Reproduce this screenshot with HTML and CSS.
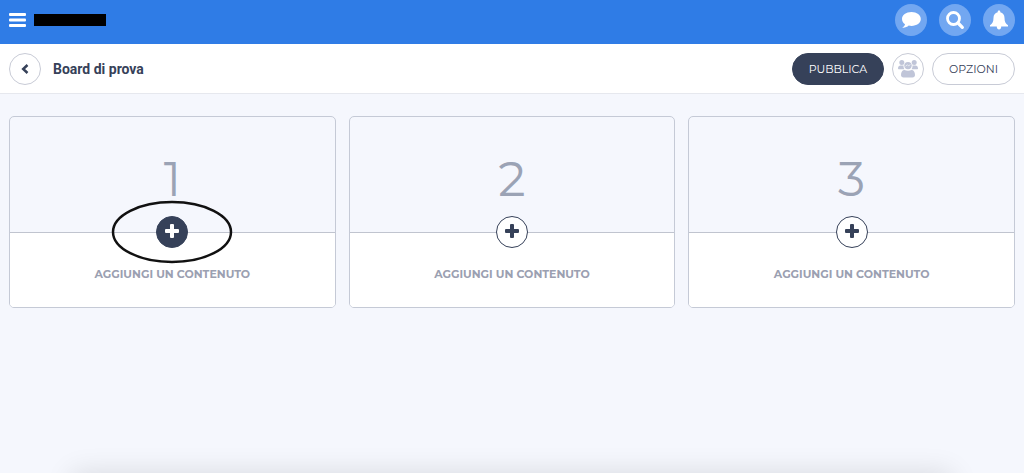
FILE: index.html
```
<!DOCTYPE html>
<html lang="it">
<head>
    <meta charset="UTF-8">
    <meta name="viewport" content="width=device-width, initial-scale=1.0">
    <title>Board di prova</title>
    <link rel="stylesheet" href="styles.css">
</head>
<body>
    <header class="header">
        <button class="menu-btn" aria-label="Menu">
            <svg width="17" height="14" viewBox="0 0 17 14" fill="currentColor">
                <rect width="17" height="3" rx="1"/>
                <rect y="5.5" width="17" height="3" rx="1"/>
                <rect y="11" width="17" height="3" rx="1"/>
            </svg>
        </button>
        <span class="account"></span>
        <nav class="header-actions">
            <button class="header-btn" aria-label="Messaggi">
                <svg width="20" height="18" viewBox="0 0 20 18" fill="currentColor">
                    <path d="M10.5 1C5 1 1 4.1 1 8c0 2.200 1.200 4 3 5.200C3.800 14.600 2.600 15.800 1.200 16.700c2.800.2 5-.6 6.500-2.100.9.200 1.800.3 2.800.3 5.200 0 9.300-3 9.300-6.900S15.700 1 10.500 1z"/>
                </svg>
            </button>
            <button class="header-btn" aria-label="Cerca">
                <svg width="20" height="20" viewBox="0 0 20 20" fill="none" stroke="currentColor">
                    <circle cx="8.500" cy="8.500" r="6" stroke-width="2.800"/>
                    <path d="M13 13l4.300 4.300" stroke-width="3.300" stroke-linecap="round"/>
                </svg>
            </button>
            <button class="header-btn" aria-label="Notifiche">
                <svg width="20" height="20" viewBox="0 0 20 20" fill="currentColor">
                    <path d="M10 .5c.8 0 1.300.5 1.300 1.200v.5c2.600.6 4.200 2.700 4.200 5.500 0 4 1.200 6 3.500 7.500v1.300H1v-1.300c2.300-1.500 3.500-3.500 3.500-7.500 0-2.800 1.600-4.900 4.200-5.500v-.5C8.700 1 9.200.5 10 .5z"/>
                    <path d="M7.800 16h4.400v1c0 1.500-1 2.400-2.200 2.400S7.800 18.500 7.800 17z"/>
                </svg>
            </button>
        </nav>
    </header>

    <div class="toolbar">
        <button class="circle-btn" aria-label="Indietro">
            <svg width="8" height="10" viewBox="0 0 8 10" fill="none" stroke="currentColor" stroke-width="2.500">
                <path d="M6.500 1L2.200 5l4.300 4"/>
            </svg>
        </button>
        <h1 class="board-title">Board di prova</h1>
        <div class="toolbar-actions">
            <button class="pill-btn primary">PUBBLICA</button>
            <button class="circle-btn muted" aria-label="Gruppi">
                <svg width="20" height="18" viewBox="0 0 20 18" fill="currentColor">
                    <circle cx="3.800" cy="2.600" r="2.500"/>
                    <circle cx="16.200" cy="2.600" r="2.500"/>
                    <circle cx="10" cy="5.600" r="3.700"/>
                    <path d="M0 8.500C0 6.500 1 5.500 2.500 5.500h3c0 2 .3 2.800 1 3.800H1C.4 9.300 0 9.100 0 8.500zM20 8.500c0-2-1-3-2.500-3h-3c0 2-.3 2.800-1 3.800H19c.6 0 1-.2 1-.8z"/>
                    <path d="M6.500 9.900c1 .5 2.200.8 3.500.8s2.500-.3 3.500-.8c2.200 0 3.500 2 3.500 5.100 0 1.600-1 2.500-2.500 2.500h-9C4 17.500 3 16.600 3 15c0-3.100 1.300-5.100 3.500-5.100z"/>
                    <path d="M7.500 6.200l2-1.400 1 1 2-1.200" fill="none" stroke="#fff" stroke-width=".6"/>
                </svg>
            </button>
            <button class="pill-btn">OPZIONI</button>
        </div>
    </div>

    <main class="board">
        <section class="card">
            <div class="card-number">1</div>
            <div class="card-body">
                <div class="add-wrap">
                    <button class="add-btn active" id="add1" aria-labelledby="label1">
                        <svg width="14" height="14" viewBox="0 0 14 14" fill="currentColor">
                            <path d="M6 0h2q1 0 1 1v4h4q1 0 1 1v2q0 1-1 1H9v4q0 1-1 1H6q-1 0-1-1V9H1Q0 9 0 8V6q0-1 1-1h4V1q0-1 1-1z"/>
                        </svg>
                    </button>
                    <svg class="highlight" width="122" height="64" viewBox="0 0 122 64">
                        <ellipse cx="61" cy="32" rx="59" ry="30"/>
                    </svg>
                </div>
                <label class="card-label" id="label1" for="add1">AGGIUNGI UN CONTENUTO</label>
            </div>
        </section>
        <section class="card">
            <div class="card-number">2</div>
            <div class="card-body">
                <div class="add-wrap">
                    <button class="add-btn" id="add2" aria-labelledby="label2">
                        <svg width="14" height="14" viewBox="0 0 14 14" fill="currentColor">
                            <path d="M6 0h2q1 0 1 1v4h4q1 0 1 1v2q0 1-1 1H9v4q0 1-1 1H6q-1 0-1-1V9H1Q0 9 0 8V6q0-1 1-1h4V1q0-1 1-1z"/>
                        </svg>
                    </button>
                </div>
                <label class="card-label" id="label2" for="add2">AGGIUNGI UN CONTENUTO</label>
            </div>
        </section>
        <section class="card">
            <div class="card-number">3</div>
            <div class="card-body">
                <div class="add-wrap">
                    <button class="add-btn" id="add3" aria-labelledby="label3">
                        <svg width="14" height="14" viewBox="0 0 14 14" fill="currentColor">
                            <path d="M6 0h2q1 0 1 1v4h4q1 0 1 1v2q0 1-1 1H9v4q0 1-1 1H6q-1 0-1-1V9H1Q0 9 0 8V6q0-1 1-1h4V1q0-1 1-1z"/>
                        </svg>
                    </button>
                </div>
                <label class="card-label" id="label3" for="add3">AGGIUNGI UN CONTENUTO</label>
            </div>
        </section>
    </main>

    <div class="bottom-shadow"></div>
</body>
</html>
```

FILE: styles.css
```
* {
    margin: 0;
    padding: 0;
    box-sizing: border-box;
}

body {
    font-family: Montserrat, Inter, sans-serif;
    background: #f5f7fd;
    color: #364159;
    min-height: 100vh;
    overflow: hidden;
}

button {
    display: flex;
    align-items: center;
    justify-content: center;
    border: none;
    background: none;
    color: inherit;
    font-family: inherit;
    cursor: pointer;
}

.header {
    display: flex;
    align-items: center;
    height: 44px;
    padding: 0 9px 4px;
    gap: 8px;
    background: #2f7ce6;
    color: #fff;
}

.account {
    width: 72px;
    height: 12px;
    background: #000;
}

.header-actions {
    display: flex;
    gap: 12px;
    margin-left: auto;
}

.header-btn {
    width: 32px;
    height: 32px;
    border-radius: 50%;
    background: #72a7f1;
}

.toolbar {
    display: flex;
    align-items: center;
    height: 50px;
    padding: 0 9px;
    gap: 12px;
    background: #fff;
    border-bottom: 1px solid #e6e8ee;
}

.circle-btn {
    width: 32px;
    height: 32px;
    border: 1px solid #c8cbd6;
    border-radius: 50%;
}

.muted {
    color: #c0c5d8;
}

.board-title {
    font-family: Roboto, sans-serif;
    font-size: 14px;
    font-weight: 700;
}

.toolbar-actions {
    display: flex;
    gap: 8px;
    margin-left: auto;
}

.pill-btn {
    height: 32px;
    padding: 0 16px;
    border: 1px solid #c8cbd6;
    border-radius: 16px;
    font-size: 11px;
}

.primary {
    background: #364159;
    border-color: #364159;
    color: #fff;
}

.board {
    display: grid;
    grid-template-columns: repeat(3, 1fr);
    gap: 13px;
    padding: 22px 9px;
}

.card {
    border: 1px solid #c5cad6;
    border-radius: 5px;
    overflow: hidden;
}

.card-number {
    height: 115px;
    padding-top: 32px;
    font-size: 48px;
    font-weight: 400;
    line-height: 60px;
    text-align: center;
    color: #9ba3b5;
}

.card-body {
    display: flex;
    flex-direction: column;
    align-items: center;
    gap: 17px;
    padding-bottom: 24px;
    border-top: 1px solid #c0c4cf;
    background: #fff;
}

.add-wrap {
    position: relative;
    margin-top: -17px;
}

.add-btn {
    width: 32px;
    height: 32px;
    padding-bottom: 2px;
    border: 1px solid #364159;
    border-radius: 50%;
    background: #fff;
}

.add-btn.active {
    background: #364159;
    color: #fff;
}

/* hand-drawn style ring around the first add button */
.highlight {
    position: absolute;
    top: 50%;
    left: 50%;
    transform: translate(-50%, -50%);
    fill: none;
    stroke: #111;
    stroke-width: 2.5;
    pointer-events: none;
}

.card-label {
    font-size: 11px;
    font-weight: 700;
    line-height: 18px;
    color: #9ba0b1;
    cursor: pointer;
}

.bottom-shadow {
    position: fixed;
    top: 100%;
    left: 72px;
    right: 72px;
    height: 40px;
    box-shadow: 0 0 28px rgba(0, 0, 0, 0.12);
}
```
